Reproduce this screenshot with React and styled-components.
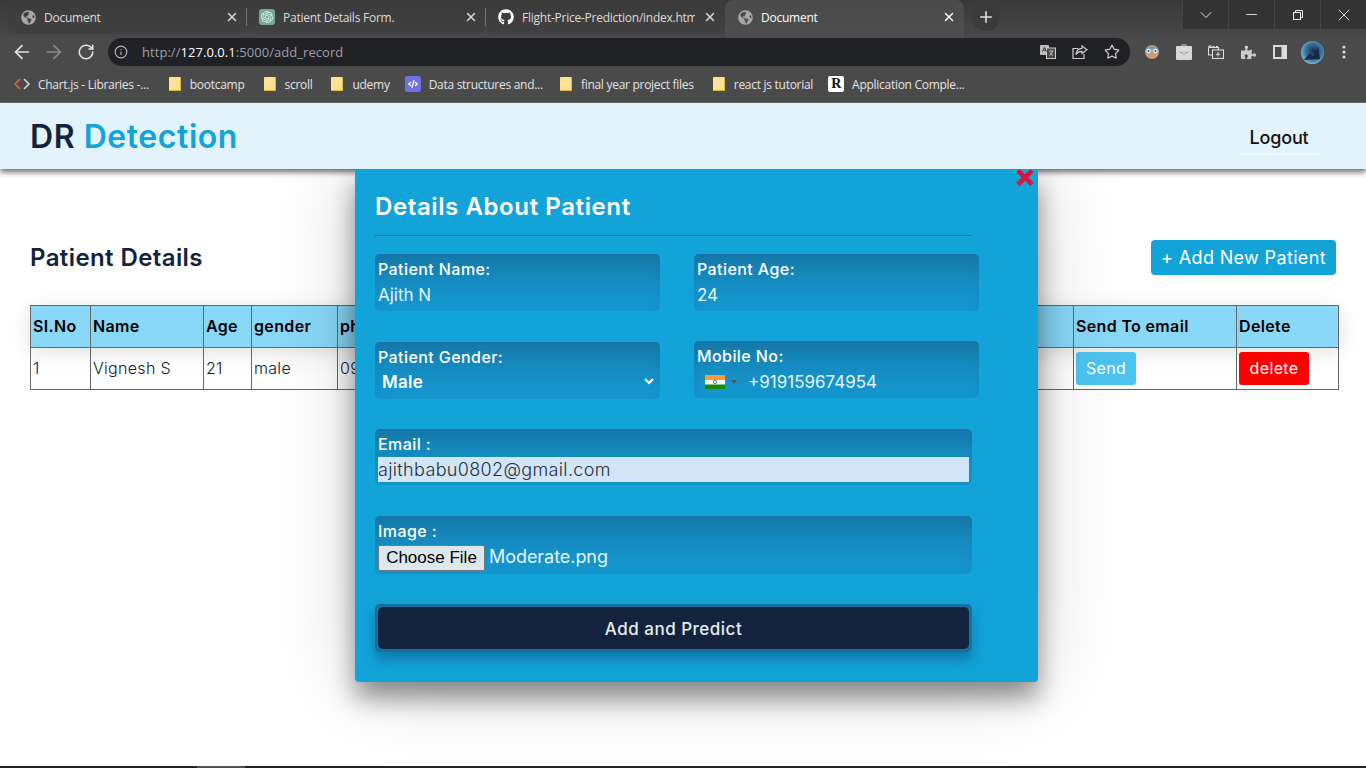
import React from "react";
import styled, { createGlobalStyle } from "styled-components";
import { FaGlobeAmericas, FaGithub, FaPuzzlePiece, FaCode } from "react-icons/fa";
import { SiOpenai } from "react-icons/si";
import { ArrowLeft, ArrowRight, RotateCw, Info, X, Plus, ChevronDown, Minus, Star } from "lucide-react";

const Global = createGlobalStyle`
  html, body { margin: 0; padding: 0; background: #fff; }
  * { box-sizing: border-box; }
  body { font-family: "Inter", "Liberation Sans", sans-serif; }
`;
const Page = styled.div`
  width: 1366px; height: 768px; overflow: hidden; position: relative;
  display: flex; flex-direction: column; background: #fff;
`;
const TabStrip = styled.div`
  height: 38px; flex: none; display: flex; padding-left: 8px;
  background: linear-gradient(#383838, #484848);
  position: relative;
`;
const Tab = styled.div`
  width: 239px; height: ${p => (p.$active ? 38 : 34)}px; display: flex; align-items: center;
  padding: 0 8px ${p => (p.$active ? 4 : 0)}px 12px; gap: 8px; position: relative;
  font: 12px "Open Sans", sans-serif; color: ${p => (p.$active ? "#fff" : "#dcdcdc")};
  background: ${p => (p.$active ? "linear-gradient(#4a4a4a, #4e4e4e)" : "linear-gradient(#3a3a3a, #414141)")};
  border-radius: ${p => (p.$active ? "8px 8px 0 0" : "0 0 8px 8px")};
  ${p => p.$sep && `&::after { content: ""; position: absolute; right: 0; top: 8px; height: 18px; width: 1px; background: #777; }`}
`;
const TabTitle = styled.span`
  flex: 1; white-space: nowrap; overflow: hidden; letter-spacing: -0.25px;
`;
const Fav = styled.span`
  width: 16px; height: 16px; display: flex; align-items: center; justify-content: center; flex: none;
`;
const GptFav = styled(Fav)`
  background: #74aa9c; border-radius: 3px; color: #e8f4f0;
`;
const NewTab = styled.div`
  width: 28px; height: 28px; margin: 3px 0 0 8px; border-radius: 50%; background: #3a3a3a;
  display: flex; align-items: center; justify-content: center; color: #ddd; flex: none;
`;
const WinControls = styled.div`
  margin-left: auto; display: flex; height: 29px; background: #333; color: #eee; flex: none;
`;
const WinBtn = styled.div`
  width: 46px; display: flex; align-items: center; justify-content: center;
  border-left: 1px solid #444; flex: none;
`;
const Toolbar = styled.div`
  height: 32px; flex: none; background: #4a4a4a; display: flex; align-items: flex-start; padding-left: 6px;
`;
const NavIcon = styled.span`
  width: 32px; height: 28px; display: flex; align-items: center; justify-content: center; flex: none;
  color: ${p => p.$dim ? "#8b8b8b" : "#e4e4e4"};
`;
const Omnibox = styled.div`
  width: 1022px; height: 28px; margin-left: 6px; border-radius: 14px; background: #202124; flex: none;
  display: flex; align-items: center; padding: 0 10px 0 6px;
  font: 13px "Open Sans", sans-serif; color: #9aa0a6; letter-spacing: 0.05px;
`;
const InfoSlot = styled.span` width: 14px; display: flex; flex: none; `;
const Url = styled.span` margin-left: 14px; white-space: nowrap; flex: 1; `;
const Host = styled.b` color: #fff; font-weight: 400; `;
const OmniIcons = styled.div` display: flex; gap: 16px; align-items: center; color: #ccc; `;
const ExtIcons = styled.div`
  display: flex; align-items: center; height: 28px; margin-left: 6px; color: #ddd; flex: none;
`;
const ExtSlot = styled.span`
  width: 32px; height: 28px; display: flex; align-items: center; justify-content: center; flex: none;
`;
const Bookmarks = styled.div`
  height: 33px; flex: none; background: #4a4a4a; border-bottom: 1px solid #6a6a6a;
  display: flex; align-items: center; padding: 0 0 4px 14px;
  font: 12px "Open Sans", sans-serif; color: #e4e4e4; letter-spacing: -0.28px;
`;
const Mark = styled.div`
  display: flex; align-items: center; gap: 8px; margin-right: ${p => p.$gap || 19}px; white-space: nowrap;
`;
const Folder = styled.span`
  width: 12px; height: 14px; background: #fde293; border-right: 1px solid #e0b93e; border-bottom: 1px solid #e0b93e;
  border-radius: 1px; margin-right: 1px; flex: none;
`;
const SquareFav = styled.span`
  width: 16px; height: 16px; border-radius: 2px; background: ${p => p.$bg}; color: ${p => p.$fg || "#fff"};
  display: flex; align-items: center; justify-content: center; flex: none;
  font: 700 14px "Liberation Serif", serif;
`;
const NavBar = styled.header`
  height: 66px; flex: none; background: #e3f3fb; display: flex; align-items: center;
  justify-content: space-between; padding: 0 46px 0 30px;
  box-shadow: 0 3px 6px rgba(0,0,0,.6); position: relative;
`;
const Logo = styled.h1`
  margin: 0; font-size: 32px; font-weight: 600; color: #13233d; letter-spacing: 0.55px;
`;
const LogoAccent = styled.span` color: #12a3d9; `;
const Logout = styled.a`
  width: 82px; height: 34px; text-align: center; font-size: 18px; font-weight: 500; color: #111;
  border-bottom: 1px solid #f4fbff; line-height: 34px; margin-top: 3px; letter-spacing: -0.15px;
`;
const Main = styled.main`
  flex: 1; padding: 71px 28px 0 30px;
`;
const Head = styled.div`
  display: flex; justify-content: space-between; align-items: center; padding-right: 2px; height: 35px;
`;
const Title = styled.h2`
  margin: 0; font-size: 24px; font-weight: 600; color: #13233d; letter-spacing: 0.4px;
`;
const AddBtn = styled.button`
  width: 185px; height: 35px; border: 0; border-radius: 4px; background: #12a3d9; color: #fff;
  font: 400 18px "Inter", sans-serif; padding: 0; letter-spacing: 0.35px;
`;
const Table = styled.table`
  margin-top: 30px; border-collapse: collapse; table-layout: fixed; width: 1308px;
  font-size: 16px; color: #101b30;
`;
const THead = styled.thead`
  box-shadow: 0 4px 22px rgba(0,0,0,.13);
`;
const Th = styled.th`
  height: 42px; border: 1px solid #666; background: #89d8f8; text-align: left; padding: 0 2px 2px;
  font-weight: 600; font-size: 16px; color: #000; white-space: nowrap; overflow: hidden; letter-spacing: 0.35px;
`;
const Td = styled.td`
  height: 42px; border: 1px solid #666; padding: 0 2px 1px; white-space: nowrap; font-weight: 300;
  font-size: 16px; overflow: hidden; letter-spacing: 0.3px;
`;
const RowBtn = styled.button`
  height: 33px; width: ${p => p.$w}px; border: 0; border-radius: 3px; background: ${p => p.$bg};
  color: #fff; font: 400 16px "Inter", sans-serif; padding: 0; display: block; letter-spacing: 0.35px;
`;
const Modal = styled.section`
  position: absolute; left: 355px; top: 169px; width: 683px; height: 513px;
  background: #12a3d9; border-radius: 4px; padding: 20px 20px 0;
  box-shadow: 0 16px 26px rgba(0,0,0,.42), 0 0 90px rgba(0,0,0,.16);
  clip-path: inset(0 -200px -200px -200px);
  color: #fff;
`;
const Close = styled.span`
  position: absolute; right: 4px; top: 0; display: flex;
`;
const ModalTitle = styled.h3`
  margin: 0; height: 47px; border-bottom: 1px solid #13739f; width: 597px; font-size: 24px; font-weight: 600;
  line-height: 36px; letter-spacing: 0.6px;
`;
const Row = styled.div`
  display: flex; gap: 34px; margin-top: ${p => p.$mt}px; width: 604px;
`;
const Field = styled.div`
  width: ${p => p.$wide ? 597 : 285}px; height: ${p => p.$h || 57}px; border-radius: 5px; padding: 3px;
  margin-top: ${p => p.$offset || 0}px; flex: none;
  background: linear-gradient(#1678a8, #158dc2 50%, #1499d1);
  box-shadow: inset 0 0 10px rgba(16,100,150,.18);
  display: flex; flex-direction: column;
`;
const Label = styled.label`
  font-size: 16px; font-weight: 500; line-height: 24px; color: #fff; letter-spacing: 0.42px; height: 24px;
`;
const TextInput = styled.input`
  border: 0; background: transparent; outline: 0; padding: 0; height: 28px; margin-top: 1px;
  font: 400 17px "Inter", sans-serif; color: #e4f5fd; width: 100%;
`;
const EmailInput = styled(TextInput)`
  background: #d3e5f8; color: #26303f; height: 26px; margin-top: 1px; font-size: 18px; letter-spacing: 0.35px; font-weight: 300;
`;
const GenderSelect = styled.select`
  border: 0; background: transparent; outline: 0; height: 27px; margin-top: -1px; width: 100%; padding: 0;
  font: 600 17px "Inter", sans-serif; color: #fff; letter-spacing: 0.3px;
  option { color: #000; }
`;
const Phone = styled.div`
  display: flex; align-items: center; height: 28px; margin-top: 0; padding-left: 8px;
`;
const FlagBox = styled.span`
  width: 20px; height: 14px; display: flex; flex: none;
`;
const Caret = styled.span`
  width: 0; height: 0; border: 3px solid transparent; border-top: 4px solid #555; border-bottom: 0; margin: 0 11px 0 6px; flex: none;
`;
const PhoneInput = styled(TextInput)`
  margin-top: 0; flex: 1; min-width: 0; width: auto;
`;
const FileRow = styled.div`
  display: flex; align-items: center; gap: 4px; margin-top: 2px; height: 26px;
`;
const ChooseBtn = styled.button`
  width: 107px; height: 26px; padding: 0; border: 1px solid #777; border-radius: 2px; background: #dde8ee;
  font: 400 17px "Liberation Sans", sans-serif; color: #000;
`;
const FileName = styled.span`
  font-size: 18px; line-height: 22px; height: 24px; color: #e4f5fd; letter-spacing: -0.05px;
`;
const SubmitWrap = styled.div`
  width: 597px; height: 48px; margin-top: 30px; padding: 3px; border-radius: 5px; background: #14709f;
  box-shadow: 0 8px 12px rgba(10,70,110,.45);
`;
const Submit = styled.button`
  display: block; width: 100%; height: 42px; border: 0; border-radius: 5px; background: #13233d; color: #e8edf2;
  font: 500 17px "Inter", sans-serif; letter-spacing: 0.5px; padding: 1px 0 0;
`;
const Taskbar = styled.div`
  height: 2px; flex: none; background: #222; padding-left: 197px;
`;
const TaskItem = styled.div` width: 48px; height: 2px; background: #555; `;

const CloseIcon = () => (
  <svg width="18" height="17" viewBox="0 0 18 17" fill="none" stroke="#dc143c" strokeWidth="4.6">
    <path d="M2 1.5L16 15.5 M16 1.5L2 15.5" />
  </svg>
);
const BracketIcon = () => (
  <svg width="16" height="12" viewBox="0 0 16 12" fill="none" strokeWidth="1.5">
    <path d="M6 1L1 6l5 5" stroke="#e0663a" />
    <path d="M10 1l5 5-5 5" stroke="#ddd" />
  </svg>
);
const TranslateIcon = () => (
  <svg width="16" height="14" viewBox="0 0 16 14" fill="none">
    <rect x="0" y="0" width="9" height="10" rx="1" fill="#bbb" />
    <rect x="6.5" y="3" width="9" height="10.5" fill="#4a4a4a" stroke="#ccc" />
    <path d="M2.5 6.5 L4.5 2.5 L6.5 6.5 M3.2 5.2H5.8" stroke="#333" strokeWidth="1" />
    <path d="M9 6h4.5 M12.5 6c-.5 2-1.5 3.5-3.3 4.5 M10 7.5c.7 1.3 1.8 2.4 3 3" stroke="#ccc" strokeWidth=".9" />
  </svg>
);
const ShareIcon = () => (
  <svg width="16" height="14" viewBox="0 0 16 14" fill="none" stroke="#ccc" strokeWidth="1.2">
    <path d="M6 3.5H1v10h11V9" />
    <path d="M10 1l5 3.8-5 3.8V6.3C7.5 6.2 5.5 7 4 9.5 4.3 6 6.5 3.5 10 3.3z" />
  </svg>
);
const SpyIcon = () => (
  <svg width="16" height="16" viewBox="0 0 16 16">
    <circle cx="8" cy="8" r="7" fill="#d99a6c" />
    <path d="M2 5a7 7 0 0 1 12 0z" fill="#a89070" />
    <circle cx="4.5" cy="7" r="2.8" fill="#dff" stroke="#7ab" strokeWidth="1" />
    <circle cx="11.5" cy="7" r="2.8" fill="#dff" stroke="#7ab" strokeWidth="1" />
    <circle cx="4.5" cy="7" r="1" fill="#345" />
    <circle cx="11.5" cy="7" r="1" fill="#345" />
  </svg>
);
const BoxIcon = () => (
  <svg width="16" height="16" viewBox="0 0 16 16">
    <rect x="5" y="0" width="6" height="3" fill="#888" />
    <rect x="0" y="2" width="16" height="14" rx="1" fill="#d9d9d9" />
    <path d="M4 8l1.5 1L7 8 M9 8l1.5 1L12 8 M7.3 10.5h1.4" stroke="#777" fill="none" strokeWidth=".8" />
  </svg>
);
const TabsIcon = () => (
  <svg width="16" height="14" viewBox="0 0 16 14" fill="none" stroke="#ddd" strokeWidth="1.1">
    <path d="M1 2.5V1h2v1.5 M4.5 1.5h2 M8 1.5h2 M.5 2.5h10V5" />
    <path d="M.5 2.5V10H4" />
    <rect x="4.5" y="5" width="11" height="8.5" />
    <path d="M10 7v4.5 M7.8 9.2h4.4" />
  </svg>
);
const SidePanelIcon = () => (
  <svg width="14" height="14" viewBox="0 0 14 14">
    <rect width="14" height="14" fill="#ddd" />
    <rect x="2" y="2" width="6.5" height="10" fill="#4a4a4a" />
  </svg>
);
const Avatar = () => (
  <svg width="23" height="23" viewBox="0 0 23 23">
    <defs>
      <radialGradient id="av" cx="55%" cy="45%" r="65%">
        <stop offset="0" stopColor="#1c2a44" />
        <stop offset=".6" stopColor="#3d7ea8" />
        <stop offset="1" stopColor="#a8c8d8" />
      </radialGradient>
    </defs>
    <circle cx="11.5" cy="11.5" r="11.5" fill="url(#av)" />
    <path d="M3 19l6-7 3 3 5-9 2 12z" fill="#17284a" />
  </svg>
);
const DotsIcon = () => (
  <svg width="4" height="14" viewBox="0 0 4 14" fill="#ddd">
    <circle cx="2" cy="2" r="1.6" /><circle cx="2" cy="7" r="1.6" /><circle cx="2" cy="12" r="1.6" />
  </svg>
);
const RestoreIcon = () => (
  <svg width="10" height="10" viewBox="0 0 10 10" fill="none" stroke="#eee">
    <rect x=".5" y="2.5" width="7" height="7" /><path d="M2.5 2.5v-2h7v7h-2" />
  </svg>
);
const IndiaFlag = () => (
  <svg width="20" height="14" viewBox="0 0 20 14">
    <rect width="20" height="5" fill="#f93" />
    <rect y="5" width="20" height="5" fill="#fff" />
    <rect y="9.5" width="20" height="4.5" fill="#128807" />
    <circle cx="10" cy="7" r="1.7" fill="none" stroke="#6a6ab0" />
  </svg>
);

const close = <X size={14} strokeWidth={2.5} color="#d8d8d8" />;

export default function App() {
  return (
    <Page>
      <Global />
      <TabStrip>
        <Tab $sep><Fav><FaGlobeAmericas size={15} color="#a8a8a8" /></Fav><TabTitle>Document</TabTitle>{close}</Tab>
        <Tab $sep><GptFav><SiOpenai size={12} /></GptFav><TabTitle>Patient Details Form.</TabTitle>{close}</Tab>
        <Tab><Fav><FaGithub size={16} color="#fff" /></Fav><TabTitle>Flight-Price-Prediction/index.htm</TabTitle>{close}</Tab>
        <Tab $active><Fav><FaGlobeAmericas size={15} color="#a8a8a8" /></Fav><TabTitle>Document</TabTitle><X size={14} strokeWidth={2.5} color="#fff" /></Tab>
        <NewTab><Plus size={18} strokeWidth={2.2} /></NewTab>
        <WinControls>
          <WinBtn><ChevronDown size={20} strokeWidth={1.1} /></WinBtn>
          <WinBtn><Minus size={17} strokeWidth={1.2} /></WinBtn>
          <WinBtn><RestoreIcon /></WinBtn>
          <WinBtn><X size={20} strokeWidth={1.1} /></WinBtn>
        </WinControls>
      </TabStrip>
      <Toolbar>
        <NavIcon><ArrowLeft size={22} strokeWidth={1.9} /></NavIcon>
        <NavIcon $dim><ArrowRight size={22} strokeWidth={1.9} /></NavIcon>
        <NavIcon><RotateCw size={18} strokeWidth={2.1} /></NavIcon>
        <Omnibox>
          <InfoSlot><Info size={14} strokeWidth={2} color="#b8b8b8" /></InfoSlot>
          <Url>http://<Host>127.0.0.1</Host>:5000/add_record</Url>
          <OmniIcons><TranslateIcon /><ShareIcon /><Star size={16} strokeWidth={1.8} /></OmniIcons>
        </Omnibox>
        <ExtIcons>
          <ExtSlot><SpyIcon /></ExtSlot>
          <ExtSlot><BoxIcon /></ExtSlot>
          <ExtSlot><TabsIcon /></ExtSlot>
          <ExtSlot><FaPuzzlePiece size={15} color="#ccc" /></ExtSlot>
          <ExtSlot><SidePanelIcon /></ExtSlot>
          <ExtSlot><Avatar /></ExtSlot>
          <ExtSlot><DotsIcon /></ExtSlot>
        </ExtIcons>
      </Toolbar>
      <Bookmarks>
        <Mark $gap={20}><BracketIcon />Chart.js - Libraries -...</Mark>
        <Mark><Folder />bootcamp</Mark>
        <Mark><Folder />scroll</Mark>
        <Mark $gap={15}><Folder />udemy</Mark>
        <Mark $gap={17}><SquareFav $bg="#6f6fe6"><FaCode size={10} /></SquareFav>Data structures and...</Mark>
        <Mark><Folder />final year project files</Mark>
        <Mark $gap={15}><Folder />react js tutorial</Mark>
        <Mark><SquareFav $bg="#fff" $fg="#111">R</SquareFav>Application Comple...</Mark>
      </Bookmarks>
      <NavBar>
        <Logo>DR <LogoAccent>Detection</LogoAccent></Logo>
        <Logout>Logout</Logout>
      </NavBar>
      <Main>
        <Head>
          <Title>Patient Details</Title>
          <AddBtn>+ Add New Patient</AddBtn>
        </Head>
        <Table>
          <colgroup>
            <col width="60" /><col width="113" /><col width="48" /><col width="86" /><col width="200" /><col width="536" /><col width="163" /><col width="102" />
          </colgroup>
          <THead>
            <tr><Th>SI.No</Th><Th>Name</Th><Th>Age</Th><Th>gender</Th><Th>phone no</Th><Th>email</Th><Th>Send To email</Th><Th>Delete</Th></tr>
          </THead>
          <tbody>
            <tr>
              <Td>1</Td><Td>Vignesh S</Td><Td>21</Td><Td>male</Td><Td>09159674954</Td><Td>vignesh@gmail.com</Td>
              <Td><RowBtn $w={60} $bg="#4cc4ef">Send</RowBtn></Td>
              <Td><RowBtn $w={70} $bg="#ff0000">delete</RowBtn></Td>
            </tr>
          </tbody>
        </Table>
      </Main>
      <Taskbar><TaskItem /></Taskbar>
      <Modal>
        <Close><CloseIcon /></Close>
        <ModalTitle>Details About Patient</ModalTitle>
        <Row $mt={18}>
          <Field><Label>Patient Name:</Label><TextInput readOnly value="Ajith N" /></Field>
          <Field><Label>Patient Age:</Label><TextInput readOnly value="24" /></Field>
        </Row>
        <Row $mt={30}>
          <Field $offset={1}><Label>Patient Gender:</Label>
            <GenderSelect defaultValue="Male"><option>Male</option><option>Female</option></GenderSelect>
          </Field>
          <Field><Label>Mobile No:</Label>
            <Phone><FlagBox><IndiaFlag /></FlagBox><Caret /><PhoneInput readOnly value="+919159674954" /></Phone>
          </Field>
        </Row>
        <Row $mt={30}>
          <Field $wide $h={56}><Label>Email :</Label><EmailInput readOnly value="ajithbabu0802@gmail.com" /></Field>
        </Row>
        <Row $mt={31}>
          <Field $wide $h={58}><Label>Image :</Label>
            <FileRow><ChooseBtn>Choose File</ChooseBtn><FileName>Moderate.png</FileName></FileRow>
          </Field>
        </Row>
        <SubmitWrap><Submit>Add and Predict</Submit></SubmitWrap>
      </Modal>
    </Page>
  );
}
